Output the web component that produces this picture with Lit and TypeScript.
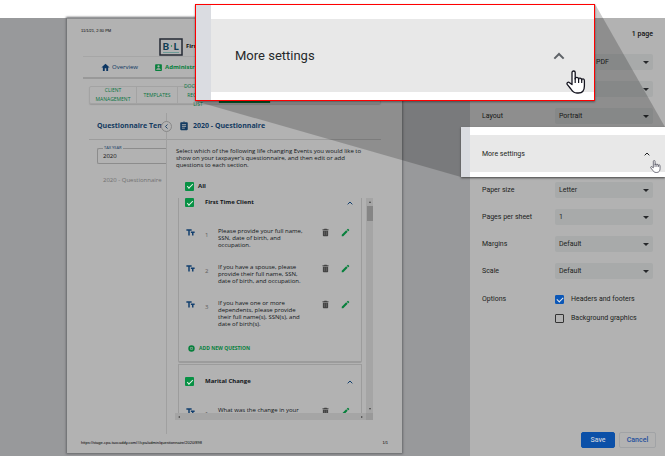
import { LitElement, html, svg, css } from "lit";
import { customElement } from "lit/decorators.js";

const questions = [
  "Please provide your full name, SSN, date of birth, and occupation.",
  "If you have a spouse, please provide their full name, SSN, date of birth, and occupation.",
  "If you have one or more dependents, please provide their full name(s), SSN(s), and date of birth(s).",
];

const icon = (cls: string, body: unknown, box = "0 0 24 24") =>
  html`<svg class="icon ${cls}" viewBox=${box} aria-hidden="true">${body}</svg>`;

const chevronUp = svg`<path fill="none" stroke="currentColor" stroke-width="3" d="M5 16l7-7 7 7"/>`;
const chevronLeft = svg`<path fill="none" stroke="currentColor" stroke-width="3" d="M15.500 5l-7 7 7 7"/>`;
const home = svg`<path fill="currentColor" d="M10 21v-7h4v7h5v-9h4L12 2 1 12h4v9z"/>`;
const accountBox = svg`<path fill="currentColor" d="M3 5v14a2 2 0 0 0 2 2h14a2 2 0 0 0 2-2V5a2 2 0 0 0-2-2H5a2 2 0 0 0-2 2zm12 4a3 3 0 1 1-6 0 3 3 0 0 1 6 0zm-9 8c0-2 4-3.100 6-3.100s6 1.100 6 3.100v1H6z"/>`;
const clipboard = svg`<path fill="currentColor" d="M19 3h-4.200a3 3 0 0 0-5.600 0H5a2 2 0 0 0-2 2v15a2 2 0 0 0 2 2h14a2 2 0 0 0 2-2V5a2 2 0 0 0-2-2zm-7 0a1 1 0 1 1 0 2 1 1 0 0 1 0-2zm2 15H7v-2h7zm3-4H7v-2h10zm0-4H7V8h10z"/>`;
const textIcon = svg`<path fill="currentColor" d="M1 3v4h5v13h4V7h5V3zm22 6h-10v4h3v7h4v-7h3z"/>`;
const trash = svg`<path fill="currentColor" d="M5 20a2 2 0 0 0 2 2h10a2 2 0 0 0 2-2V7H5zM20 3h-4l-1-1H9L8 3H4v3h16z"/><path stroke="#8a8a8a" stroke-width="1" d="M9.500 9v10M14.500 9v10"/>`;
const pencil = svg`<path fill="currentColor" d="M2 18v4h4L17.800 10.200l-4-4zM21.600 6.400a1.500 1.500 0 0 0 0-2l-2-2a1.500 1.500 0 0 0-2 0l-2.300 2.300 4 4z"/>`;
const plus = svg`<circle cx="12" cy="12" r="8" fill="none" stroke="currentColor" stroke-width="6"/><path stroke="currentColor" stroke-width="2" d="M12 8v8M8 12h8"/>`;
const hand = svg`<path fill="#fff" stroke="currentColor" stroke-width="1.300" stroke-linejoin="round" d="M6 14.500V2.600a1.600 1.600 0 0 1 3.200 0V9c0-2.200 3.400-2.200 3.400.4 0-2 3.100-1.800 3.100.7 0-1.600 2.700-1.600 2.700.6V16c0 4-2 7-6 7h-1.500c-3 0-4.500-1.500-6-4L1.200 14.400c-.8-1.600 1-2.900 2.400-1.700z"/><path fill="none" stroke="currentColor" stroke-width="1.200" d="M9.200 8v5M12.600 9v4M15.700 10v3"/>`;

@customElement("print-preview")
export class PrintPreview extends LitElement {
  static styles = css`
    :host { display: block; flex: 1; min-width: 0; padding: 0 68px 3px 67px; background: #98999b; }
    * { box-sizing: border-box; }
    .icon { display: block; flex: none; }
    .paper {
      display: flex; flex-direction: column; height: 100%;
      padding: 8px 14px 7px; background: #b2b2b2; color: #111519;
      border-top: 1px solid #8c8d8f;
      box-shadow: 0 0 2px 1px #66676a;
      font: 6px/7px "Open Sans", "Noto Sans", sans-serif;
    }
    .print-line { display: flex; justify-content: space-between; font: 4px/7px "Liberation Sans", Arial, sans-serif; color: #000; }
    .site { flex: 1; display: flex; flex-direction: column; padding: 3px 7px 0 2px; }
    .brand { display: flex; align-items: center; gap: 3px; height: 19px; padding-left: 76px; color: #111; font-weight: 700; }
    .logo { display: block; width: 24px; height: 18px; flex: none; }
    .nav { display: flex; align-items: center; gap: 16px; height: 23px; padding-left: 18px; border-top: 1px solid #a6a6a6; border-bottom: 2px solid #999; }
    .nav a { display: flex; align-items: center; gap: 2px; color: #0c3663; text-decoration: none; }
    .nav a.current { color: #07803c; font-weight: 700; }
    .nav .icon { width: 9px; height: 9px; }
    .tabs { display: flex; height: 18px; margin: 7px 0 0 6px; border: 1px solid #a3a3a3; border-radius: 2px; box-shadow: 0 1px 1px #999; }
    .tab {
      display: flex; align-items: center; justify-content: center; padding: 0; border: 0; border-right: 1px solid #a3a3a3;
      background: none; color: #08743f; font: 5px/9px "Open Sans", sans-serif; width: 41px;
    }
    .tab.first { width: 47px; }
    .tab.current { width: 52px; background: #08632f; }
    .panes { flex: 1; display: flex; margin: 9px 0 5px 6px; }
    .list { width: 78px; flex: none; border-right: 1px solid #a0a0a0; }
    .detail { flex: 1; min-width: 0; }
    .title { display: flex; align-items: center; height: 27px; margin: 0; border-bottom: 1px solid #9c9c9c; color: #123a61; font: 700 7px/10px "Open Sans", sans-serif; white-space: nowrap; }
    .list .title { padding-left: 8px; position: relative; }
    .fold {
      position: absolute; right: -6px; top: 8px; width: 11px; height: 11px; padding: 1px; border: 1px solid #888;
      border-radius: 50%; background: #b2b2b2; color: #123a61;
    }
    .fold .icon { width: 7px; height: 7px; }
    .detail .title { gap: 4px; padding-left: 12px; }
    .detail .title .icon { width: 10px; height: 10px; }
    .year { margin: 5px 0 0 8px; padding: 0 0 0 5px; height: 19px; border: 1px solid #8c8c8c; border-right: 0; border-radius: 2px 0 0 2px; }
    .year legend { padding: 0 1px; color: #0c3663; font-size: 4px; line-height: 6px; }
    .year input { display: block; width: 100%; height: 9px; padding: 0; border: 0; background: none; color: #111; font: 6px/8px "Open Sans", sans-serif; }
    .entry { margin: 13px 0 0 14px; color: #707070; white-space: nowrap; }
    .intro { margin: 8px 0 0 9px; width: 192px; }
    .all { display: flex; align-items: center; gap: 4px; margin: 12px 0 0 18px; height: 10px; font-weight: 700; }
    .check { appearance: none; flex: none; display: grid; place-content: center; margin: 0; width: 9px; height: 9px; background: #079144; border-radius: 1px; }
    .check::after { content: ""; width: 5px; height: 2px; border: solid #e4eee8; border-width: 0 0 1px 1px; transform: rotate(-45deg); margin-bottom: 1px; }
    .scroller { display: grid; grid-template-columns: 191px 7px; grid-template-rows: 215px 7px; width: 198px; margin: 7px 0 0 8px; }
    .view { overflow: hidden; padding: 0 4px 0 3px; }
    .card { border: solid #9c9c9c; border-width: 0 1px 2px; margin-bottom: 1px; height: 165px; border-radius: 0 0 2px 2px; }
    .card + .card { border-top-width: 1px; padding-top: 12px; }
    .group { display: flex; align-items: center; height: 9px; padding: 0 7px 0 6px; }
    .group b { flex: 1; padding-left: 11px; }
    .group .icon { width: 8px; height: 8px; color: #123f6e; }
    .fields { padding-top: 21px; }
    .question { display: flex; align-items: flex-start; height: 36px; padding-left: 7px; }
    .question .icon { width: 9px; height: 9px; color: #123f6e; }
    .question .num { width: 24px; padding: 4px 0 0 10px; color: #606060; }
    .question p { flex: none; margin: 0 15px 0 0; width: 88px; }
    .act { padding: 0; border: 0; background: none; margin-right: 11px; }
    .act .trash { color: #444; }
    .act .pencil { color: #07803c; }
    .add { display: flex; align-items: center; gap: 4px; margin: 8px 0 0 9px; padding: 0; border: 0; background: none; color: #07803c; font: 700 5px/8px "Open Sans", sans-serif; }
    .add .icon { width: 7px; height: 7px; }
    .vbar, .hbar { display: flex; background: #a5a5a5; justify-content: space-between; align-items: center; }
    .vbar { flex-direction: column; padding: 3px 0; }
    .thumb { width: 6px; height: 15px; background: #858585; margin: 3px 0 auto; }
    .hbar { padding: 0 3px; }
    .corner { background: #999; }
    .up, .down, .left, .right { border: 1px solid transparent; }
    .up { border-bottom: 2px solid #444; border-top: 0; }
    .down { border-top: 2px solid #444; border-bottom: 0; }
    .left { border-right: 2px solid #444; border-left: 0; }
    .right { border-left: 2px solid #444; border-right: 0; }
  `;

  private question(text: string, n: number) {
    return html`<div class="question">
      ${icon("type", textIcon)}<span class="num">${n}</span>
      <p>${text}</p>
      <button class="act" aria-label="Delete question ${n}">${icon("trash", trash)}</button>
      <button class="act" aria-label="Edit question ${n}">${icon("pencil", pencil)}</button>
    </div>`;
  }

  private group(name: string) {
    return html`<label class="group"><input class="check" type="checkbox" checked /><b>${name}</b>${icon("", chevronUp)}</label>`;
  }

  render() {
    return html`<article class="paper">
      <div class="print-line"><span>11/1/21, 2:30 PM</span></div>
      <div class="site">
        <div class="brand">
          <svg class="logo" viewBox="0 0 24 18" role="img" aria-label="B L">
            <rect x="1" y="1" width="22" height="16" fill="none" stroke="#252a35" stroke-width="1.500" />
            <text x="3.500" y="12" font-family="Lato" font-weight="900" font-size="10" fill="#123f55">B</text>
            <text x="14.500" y="12" font-family="Lato" font-weight="900" font-size="10" fill="#123f55">L</text>
            <circle cx="12.500" cy="8" r=".7" fill="#07803c" />
            <path d="M4 14.500h16" stroke="#6d9a96" stroke-width="1" />
          </svg>
          <span>Firm</span>
        </div>
        <nav class="nav">
          <a href="#overview">${icon("", home)}Overview</a>
          <a class="current" href="#administration">${icon("", accountBox)}Administration</a>
        </nav>
        <div class="tabs">
          <button class="tab first">CLIENT<br />MANAGEMENT</button>
          <button class="tab">TEMPLATES</button>
          <button class="tab">DOCUMENT<br />REQUEST<br />LIST</button>
          <button class="tab current" aria-label="Questionnaires"></button>
        </div>
        <div class="panes">
          <section class="list">
            <h2 class="title">Questionnaire Tem<button class="fold" aria-label="Collapse list">${icon("", chevronLeft)}</button></h2>
            <fieldset class="year"><legend>TAX YEAR</legend><input aria-label="Tax year" value="2020" /></fieldset>
            <div class="entry">2020 - Questionnaire</div>
          </section>
          <section class="detail">
            <h2 class="title">${icon("", clipboard)}2020 - Questionnaire</h2>
            <p class="intro">Select which of the following life changing Events you would like to show on your taxpayer's questionnaire, and then edit or add questions to each section.</p>
            <label class="all"><input class="check" type="checkbox" checked />All</label>
            <div class="scroller">
              <div class="view">
                <div class="card">
                  ${this.group("First Time Client")}
                  <div class="fields">${questions.map((q, i) => this.question(q, i + 1))}</div>
                  <button class="add">${icon("", plus)}ADD NEW QUESTION</button>
                </div>
                <div class="card">
                  ${this.group("Marital Change")}
                  <div class="fields">${this.question("What was the change in your", 1)}</div>
                </div>
              </div>
              <div class="vbar"><i class="up"></i><i class="thumb"></i><i class="down"></i></div>
              <div class="hbar"><i class="left"></i><i class="right"></i></div>
              <div class="corner"></div>
            </div>
          </section>
        </div>
      </div>
      <div class="print-line"><span>https://stage-cpa.taxcaddy.com/#/cpa/admin/questionnaire/2020/898</span><span>1/1</span></div>
    </article>`;
  }
}

@customElement("print-settings")
export class PrintSettings extends LitElement {
  static styles = css`
    :host {
      display: flex; flex-direction: column; flex: none; width: 195px; background: #b2b2b2; color: #1c1e21;
      font: 400 7px/10px Roboto, sans-serif;
    }
    * { box-sizing: border-box; }
    .icon { display: block; }
    .count { padding: 11px 12px 15px; text-align: right; color: #111; font-weight: 500; }
    .rows { display: flex; flex-direction: column; gap: 11px; }
    .row { display: flex; align-items: center; height: 16px; padding: 0 12px; }
    .row > label, .row > .name { flex: 1; }
    .drop { position: relative; width: 98px; }
    .drop::after { content: ""; position: absolute; right: 4px; top: 7px; border: 3px solid transparent; border-top-color: #26282b; border-bottom: 0; }
    select { appearance: none; display: block; width: 100%; height: 16px; padding: 0 4px; border: 0; border-radius: 2px; background: #a8aaaa; color: inherit; font: inherit; }
    .pdf select { padding-left: 41px; }
    .more {
      position: relative; z-index: 2; display: block; margin: 3px 0 5px -9px; padding: 8px 0 5px; border: 0; font: inherit; color: inherit;
      background: linear-gradient(90deg, #dadce1 9px, #fff 9px); box-shadow: 0 1px 2px #444; text-align: left;
    }
    .more .bar { display: flex; align-items: center; justify-content: space-between; height: 37px; margin-left: 9px; padding: 0 14px 0 12px; background: #e8e8e8; }
    .more .icon { width: 8px; height: 8px; }
    .more .hand { position: absolute; right: 4px; top: 33px; width: 11px; height: 13px; color: #3c3c4c; }
    .opts { display: flex; flex-direction: column; gap: 9px; width: 98px; }
    .opts label { display: flex; align-items: center; gap: 7px; white-space: nowrap; }
    .options { align-items: flex-start; height: auto; padding-top: 4px; }
    .box { appearance: none; flex: none; display: grid; place-content: center; margin: 0; width: 9px; height: 9px; border: 1px solid #333; border-radius: 1px; }
    .box:checked { background: #0b57b7; border-color: #0b57b7; }
    .box:checked::after { content: ""; width: 5px; height: 3px; border: solid #e4e8ee; border-width: 0 0 1px 1px; transform: rotate(-45deg); margin-bottom: 1px; }
    .actions { display: flex; justify-content: flex-end; gap: 4px; margin-top: auto; padding: 0 9px 8px 0; }
    .actions button { height: 16px; padding: 0; border: 1px solid #a1a3a6; border-radius: 2px; background: none; color: #234f9d; font: inherit; font-weight: 500; width: 37px; }
    .actions .save { width: 34px; background: #0b50a8; border-color: #0b50a8; color: #c3cddb; }
  `;

  private drop(name: string, value: string, cls = "") {
    const id = name.toLowerCase().replace(/ /g, "-");
    return html`<div class="row"><label for=${id}>${name}</label><span class="drop ${cls}"><select id=${id}><option>${value}</option></select></span></div>`;
  }

  render() {
    return html`
      <div class="count">1 page</div>
      <div class="rows">
        ${this.drop("Destination", "PDF", "pdf")}
        ${this.drop("Pages", "All")}
        ${this.drop("Layout", "Portrait")}
      </div>
      <button class="more" aria-expanded="true"><span class="bar">More settings${icon("", chevronUp)}</span>${icon("hand", hand, "0 0 20 24")}</button>
      <div class="rows">
        ${this.drop("Paper size", "Letter")}
        ${this.drop("Pages per sheet", "1")}
        ${this.drop("Margins", "Default")}
        ${this.drop("Scale", "Default")}
        <div class="row options">
          <span class="name">Options</span>
          <div class="opts">
            <label><input class="box" type="checkbox" checked />Headers and footers</label>
            <label><input class="box" type="checkbox" />Background graphics</label>
          </div>
        </div>
      </div>
      <div class="actions"><button class="save">Save</button><button>Cancel</button></div>
    `;
  }
}

@customElement("app-root")
export class AppRoot extends LitElement {
  static styles = css`
    :host { display: block; position: relative; min-height: 100vh; background: #fff; overflow: hidden; }
    * { box-sizing: border-box; }
    .dialog { display: flex; min-height: 100vh; padding-top: 18px; }
    .beam { position: absolute; z-index: 1; right: 0; top: 4px; width: 470px; height: 173px; pointer-events: none; }
    .callout {
      position: absolute; z-index: 3; right: 70px; top: 4px; width: 400px; padding: 14px 0 8px; border: 1px solid #f00;
      background: linear-gradient(90deg, #dadce1 15px, #fff 15px); box-shadow: 0 1px 2px #0006;
    }
    .bar { display: flex; align-items: center; justify-content: space-between; height: 73px; margin-left: 15px; padding: 0 27px 0 24px; background: #e8e8e8; color: #26282b; font: 13px/16px Roboto, sans-serif; }
    .icon { display: block; }
    .up { width: 16px; height: 16px; color: #5f6368; }
    .hand { position: absolute; right: 8px; top: 65px; width: 20px; height: 24px; color: #14141f; }
  `;

  render() {
    return html`
      <main class="dialog"><print-preview></print-preview><print-settings></print-settings></main>
      <svg class="beam" viewBox="0 0 470 173" aria-hidden="true"><path fill="#000" fill-opacity=".2" d="M0 97L266 173L470 123L400 0z" /></svg>
      <div class="callout">
        <div class="bar"><span>More settings</span>${icon("up", chevronUp)}</div>
        ${icon("hand", hand, "0 0 20 24")}
      </div>
    `;
  }
}
